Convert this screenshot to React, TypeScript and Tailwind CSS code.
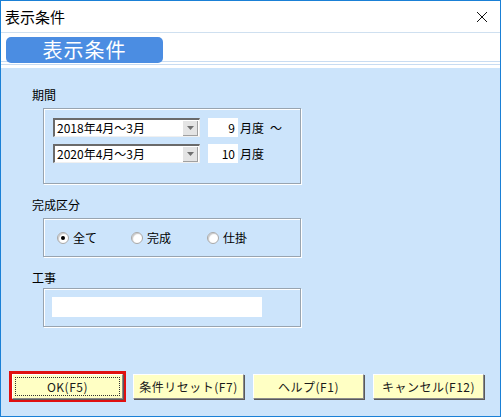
import React from "react";

const jp = { fontFamily: '"Noto Sans CJK JP", "Noto Sans", sans-serif' };

function GroupBox({ className, children }: { className: string; children?: React.ReactNode }) {
  return (
    <div
      className={
        "border border-[#98a4b0] shadow-[inset_1px_1px_0_#ffffff,1px_1px_0_#ffffff] " + className
      }
    >
      {children}
    </div>
  );
}

function Combo({ value }: { value: string }) {
  return (
    <div className="flex h-[19px] w-[147px] items-center border-t-2 border-l-2 border-t-[#6a6a6a] border-l-[#6a6a6a] border-b border-r border-b-[#f0f0f0] border-r-[#f0f0f0] bg-white">
      <span className="flex-1 pl-[2px] text-[12px] leading-none text-black">{value}</span>
      <div className="mr-[1px] flex h-[15px] w-[15px] items-center justify-center border-r border-b border-[#a0a0a0] bg-[#e4e4e4]">
        <svg width="7" height="4" viewBox="0 0 7 4">
          <path d="M0 0h7L3.5 4z" fill="#707070" />
        </svg>
      </div>
    </div>
  );
}

function NumBox({ value }: { value: string }) {
  return (
    <div className="flex h-[19px] w-[30px] items-center justify-end bg-white pr-[3px] text-[12px] leading-none text-black">
      {value}
    </div>
  );
}

function Radio({ label, checked }: { label: string; checked?: boolean }) {
  return (
    <div className="flex items-center gap-[4px]">
      <div className="flex h-[12px] w-[12px] items-center justify-center rounded-full border border-[#a8a8a8] bg-white shadow-[inset_1px_1px_1px_#c8c8c8]">
        {checked && <div className="h-[4px] w-[4px] rounded-full bg-black" />}
      </div>
      <span className="text-[12px] leading-none text-black">{label}</span>
    </div>
  );
}

function Btn({ label, className }: { label: string; className?: string }) {
  return (
    <div
      className={
        "flex h-[25px] w-[111px] items-center justify-center border border-t-white border-l-white border-b-[#8a8a8a] border-r-[#8a8a8a] bg-[#ffffc4] shadow-[1px_1px_0_#5a5a5a] text-[12px] leading-none tracking-[0.5px] text-[#1a1a1a] " +
        (className ?? "")
      }
    >
      {label}
    </div>
  );
}

export default function App() {
  return (
    <div
      className="flex h-[417px] w-[501px] flex-col overflow-hidden border border-[#1a80d6] bg-white"
      style={jp}
    >
      {/* title bar */}
      <div className="flex h-[31px] items-center justify-between bg-white pl-[4px] pr-[12px]">
        <span className="text-[15px] leading-none text-black">表示条件</span>
        <svg width="12" height="12" viewBox="0 0 12 12">
          <path d="M1 1L11 11M11 1L1 11" stroke="#111" strokeWidth="1" />
        </svg>
      </div>
      <div className="h-[1px] bg-[#cfe0f0]" />

      {/* header with tab */}
      <div className="relative h-[35px] bg-white">
        <div className="absolute left-0 right-0 top-[28px] h-[1px] bg-[#c8dcf2]" />
        <div className="absolute left-0 right-0 top-[31px] h-[1px] bg-[#c8dcf2]" />
        <div className="absolute left-[5px] top-[4px] flex h-[26px] w-[157px] items-center justify-center rounded-[5px] bg-[#4b8de2]">
          <span className="text-[20px] leading-none tracking-[1px] text-white">表示条件</span>
        </div>
      </div>

      {/* body */}
      <div className="relative flex flex-1 flex-col bg-[#cce4fb] pl-[31px]">
        <div className="mt-[21px] text-[12px] leading-none text-black">期間</div>
        <GroupBox className="ml-[11px] mt-[7px] h-[76px] w-[258px] pl-[9px] pt-[9px]">
          <div className="flex items-center">
            <Combo value="2018年4月～3月" />
            <div className="ml-[8px]">
              <NumBox value="9" />
            </div>
            <span className="ml-[2px] text-[12px] leading-none text-black">月度</span>
            <span className="ml-[6px] text-[12px] leading-none text-black">～</span>
          </div>
          <div className="mt-[7px] flex items-center">
            <Combo value="2020年4月～3月" />
            <div className="ml-[8px]">
              <NumBox value="10" />
            </div>
            <span className="ml-[2px] text-[12px] leading-none text-black">月度</span>
          </div>
        </GroupBox>

        <div className="mt-[15px] text-[12px] leading-none text-black">完成区分</div>
        <GroupBox className="ml-[11px] mt-[7px] flex h-[39px] w-[258px] items-center pl-[13px]">
          <div className="w-[74px]">
            <Radio label="全て" checked />
          </div>
          <div className="w-[76px]">
            <Radio label="完成" />
          </div>
          <Radio label="仕掛" />
        </GroupBox>

        <div className="mt-[15px] text-[12px] leading-none text-black">工事</div>
        <GroupBox className="ml-[11px] mt-[4px] h-[39px] w-[258px] pl-[8px] pt-[8px]">
          <div className="h-[20px] w-[210px] bg-white" />
        </GroupBox>

        {/* buttons */}
        <div className="absolute bottom-[14px] left-[8px] flex items-center">
          <div className="border-[3px] border-[#e01010] p-0">
            <div className="relative">
              <Btn label="OK(F5)" className="w-[110px]" />
              <div className="pointer-events-none absolute inset-[3px] border border-dotted border-[#333]" />
            </div>
          </div>
          <Btn label="条件リセット(F7)" className="ml-[7px]" />
          <Btn label="ヘルプ(F1)" className="ml-[9px]" />
          <Btn label="キャンセル(F12)" className="ml-[9px]" />
        </div>
      </div>
    </div>
  );
}
